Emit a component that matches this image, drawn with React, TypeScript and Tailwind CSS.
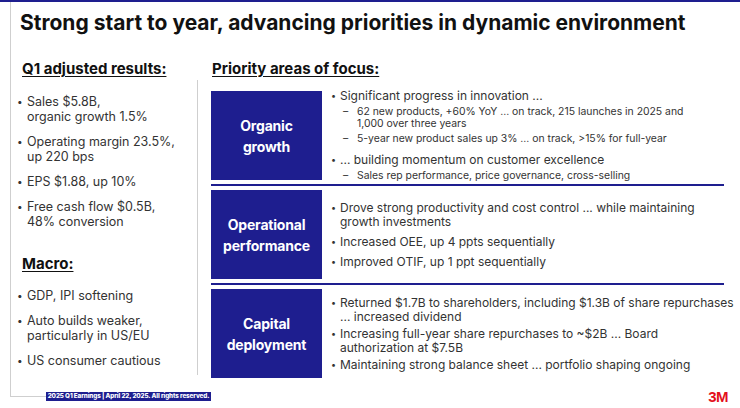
import React from 'react'

// Slide: Q1 results + priority areas
const BLUE = 'bg-[#1e1e8f]'

type Sub = string[]
interface Point {
  lines: string[]
  subs?: Sub[]
}
interface Area {
  label: string[]
  gap: string
  points: Point[]
}

const results: string[][] = [
  ['Sales $5.8B,', 'organic growth 1.5%'],
  ['Operating margin 23.5%,', 'up 220 bps'],
  ['EPS $1.88, up 10%'],
  ['Free cash flow $0.5B,', '48% conversion'],
]

const macro: string[][] = [
  ['GDP, IPI softening'],
  ['Auto builds weaker,', 'particularly in US/EU'],
  ['US consumer cautious'],
]

const areas: Area[] = [
  {
    label: ['Organic', 'growth'],
    gap: 'gap-[8px]',
    points: [
      {
        lines: ['Significant progress in innovation ...'],
        subs: [
          ['62 new products, +60% YoY ... on track, 215 launches in 2025 and', '1,000 over three years'],
          ['5-year new product sales up 3% ... on track, >15% for full-year'],
        ],
      },
      {
        lines: ['... building momentum on customer excellence'],
        subs: [['Sales rep performance, price governance, cross-selling']],
      },
    ],
  },
  {
    label: ['Operational', 'performance'],
    gap: 'gap-[6px]',
    points: [
      { lines: ['Drove strong productivity and cost control ... while maintaining', 'growth investments'] },
      { lines: ['Increased OEE, up 4 ppts sequentially'] },
      { lines: ['Improved OTIF, up 1 ppt sequentially'] },
    ],
  },
  {
    label: ['Capital', 'deployment'],
    gap: 'gap-[3px]',
    points: [
      { lines: ['Returned $1.7B to shareholders, including $1.3B of share repurchases', '... increased dividend'] },
      { lines: ['Increasing full-year share repurchases to ~$2B ... Board', 'authorization at $7.5B'] },
      { lines: ['Maintaining strong balance sheet ... portfolio shaping ongoing'] },
    ],
  },
]

const LeftList = ({ items }: { items: string[][] }) => (
  <ul className="flex flex-col gap-[10px]">
    {items.map((item, i) => (
      <li key={i} className="flex text-[12.5px] leading-[15px]">
        <span className="w-[10px] shrink-0 text-[10px]">•</span>
        <span className="whitespace-nowrap">
          {item.map((l, j) => (
            <span key={j} className="block">{l}</span>
          ))}
        </span>
      </li>
    ))}
  </ul>
)

const AreaRow = ({ area }: { area: Area }) => (
  <div className="flex items-center h-[89px]">
    <div className={`${BLUE} w-[111px] h-[89px] shrink-0 flex flex-col items-center justify-center text-white font-bold text-[14px] tracking-[-0.2px] leading-[21px]`}>
      {area.label.map((l) => (
        <span key={l}>{l}</span>
      ))}
    </div>
    <ul className={`ml-[9px] flex flex-col ${area.gap}`}>
      {area.points.map((p, i) => (
        <li key={i}>
          <div className="flex text-[12px] leading-[14px]">
            <span className="w-[9px] shrink-0 text-[9px]">•</span>
            <span className="whitespace-nowrap">
              {p.lines.map((l) => (
                <span key={l} className="block">{l}</span>
              ))}
            </span>
          </div>
          {p.subs && (
            <div className="flex flex-col gap-[3px] mt-[3px] ml-[12px]">
              {p.subs.map((s, k) => (
                <div key={k} className="flex text-[10.4px] leading-[12px]">
                  <span className="w-[14px] shrink-0">–</span>
                  <span className="whitespace-nowrap">
                    {s.map((l) => (
                      <span key={l} className="block">{l}</span>
                    ))}
                  </span>
                </div>
              ))}
            </div>
          )}
        </li>
      ))}
    </ul>
  </div>
)

export default function App() {
  return (
    <div className="w-[740px] h-[408px] bg-white overflow-hidden border-t-2 border-[#1e1e8f] font-['Inter',sans-serif] text-[#333]">
      <div className="ml-[10px] h-[390px] border-l border-[#cfcfcf]">
        <h1 className="pl-[9px] pt-[9px] text-[21px] leading-[24px] font-bold text-[#111] whitespace-nowrap">
          Strong start to year, advancing priorities in dynamic environment
        </h1>

        <div className="flex mt-[25px] text-[15px] leading-[18px] font-bold text-[#111]">
          <div className="w-[187px] pl-[11px]">
            <span className="underline decoration-1 underline-offset-2">Q1 adjusted results:</span>
          </div>
          <div className="pl-[14px]">
            <span className="underline decoration-1 underline-offset-2">Priority areas of focus:</span>
          </div>
        </div>

        <div className="flex mt-[2px]">
          <div className="w-[186px] pl-[6px] pt-[14px]">
            <LeftList items={results} />
            <div className="mt-[26px] pl-[5px] text-[15px] leading-[18px] font-bold text-[#111]">
              <span className="underline decoration-1 underline-offset-2">Macro:</span>
            </div>
            <div className="mt-[15px]">
              <LeftList items={macro} />
            </div>
          </div>
          <div className="w-px h-[295px] bg-[#cfcfcf]" />
          <div className="pl-[13px] pt-[11px] w-[526px]">
            {areas.map((a, i) => (
              <React.Fragment key={a.label[0]}>
                {i > 0 && <div className={`${BLUE} h-[2px] my-[4px]`} />}
                <AreaRow area={a} />
              </React.Fragment>
            ))}
          </div>
        </div>
      </div>

      <div className="flex h-[10px]">
        <div className="ml-[10px] w-[36px] h-[5px] border-l border-b border-[#cfcfcf]" />
        <div className={`${BLUE} w-[165px] h-[9px] flex items-center justify-center text-white font-extrabold text-[6.3px] tracking-[-0.1px] leading-[9px] whitespace-nowrap`}>
          2025 Q1 Earnings | April 22, 2025. All rights reserved.
        </div>
        <div className="ml-auto mr-[12px] font-['Liberation_Sans',sans-serif] font-bold text-[15px] leading-[10px] tracking-[-0.5px] text-[#e3101c]">
          3M
        </div>
      </div>
    </div>
  )
}
